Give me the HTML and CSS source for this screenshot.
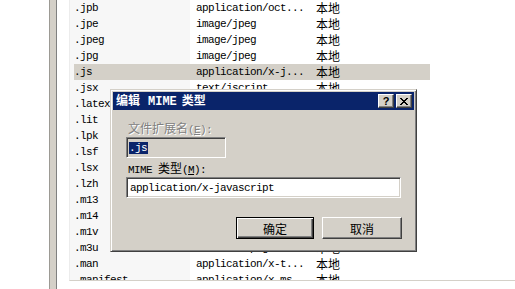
FILE: index.html
```html
<!DOCTYPE html>
<html lang="zh-CN">
<head>
    <meta charset="UTF-8">
    <title>编辑 MIME 类型</title>
    <link rel="stylesheet" href="styles.css">
</head>
<body>
    <div class="screen">
        <div class="side"></div>
        <div class="bar"></div>
        <div class="gap"></div>
        <div class="list">
            <div class="row"><span class="c1">.jpb</span><span class="c2">application/oct...</span><span class="c3">本地</span></div>
            <div class="row"><span class="c1">.jpe</span><span class="c2">image/jpeg</span><span class="c3">本地</span></div>
            <div class="row"><span class="c1">.jpeg</span><span class="c2">image/jpeg</span><span class="c3">本地</span></div>
            <div class="row"><span class="c1">.jpg</span><span class="c2">image/jpeg</span><span class="c3">本地</span></div>
            <div class="row sel"><span class="c1">.js</span><span class="c2">application/x-j...</span><span class="c3">本地</span></div>
            <div class="row"><span class="c1">.jsx</span><span class="c2">text/jscript</span><span class="c3">本地</span></div>
            <div class="row"><span class="c1">.latex</span><span class="c2">application/x-l...</span><span class="c3">本地</span></div>
            <div class="row"><span class="c1">.lit</span><span class="c2">application/x-ms...</span><span class="c3">本地</span></div>
            <div class="row"><span class="c1">.lpk</span><span class="c2">application/x-ms...</span><span class="c3">本地</span></div>
            <div class="row"><span class="c1">.lsf</span><span class="c2">video/x-la-asf</span><span class="c3">本地</span></div>
            <div class="row"><span class="c1">.lsx</span><span class="c2">video/x-la-asf</span><span class="c3">本地</span></div>
            <div class="row"><span class="c1">.lzh</span><span class="c2">application/oct...</span><span class="c3">本地</span></div>
            <div class="row"><span class="c1">.m13</span><span class="c2">application/x-ms...</span><span class="c3">本地</span></div>
            <div class="row"><span class="c1">.m14</span><span class="c2">application/x-ms...</span><span class="c3">本地</span></div>
            <div class="row"><span class="c1">.m1v</span><span class="c2">video/mpeg</span><span class="c3">本地</span></div>
            <div class="row"><span class="c1">.m3u</span><span class="c2">audio/x-mpegurl</span><span class="c3">本地</span></div>
            <div class="row"><span class="c1">.man</span><span class="c2">application/x-t...</span><span class="c3">本地</span></div>
            <div class="row"><span class="c1">.manifest</span><span class="c2">application/x-ms...</span><span class="c3">本地</span></div>
        </div>

        <div class="dialog">
            <div class="title">
                <span class="title-text">编辑<span class="en-b">MIME</span>类型</span>
                <div class="caption-btns">
                    <div class="cbtn help">?</div>
                    <div class="cbtn close">
                        <svg width="8" height="7" viewBox="0 0 8 7">
                            <path d="M0 0h2v1h-2zM6 0h2v1h-2zM1 1h2v1h-2zM5 1h2v1h-2zM2 2h4v1h-4zM3 3h2v1h-2zM2 4h4v1h-4zM1 5h2v1h-2zM5 5h2v1h-2zM0 6h2v1h-2zM6 6h2v1h-2z" fill="#000"/>
                        </svg>
                    </div>
                </div>
            </div>
            <div class="body">
                <div class="label disabled">文件扩展名<span class="en">(<u>E</u>):</span></div>
                <div class="edit edit-ext"><span class="en picked">.js</span></div>
                <div class="label"><span class="en">MIME&nbsp;</span>类型<span class="en">(<u>M</u>):</span></div>
                <div class="edit edit-type"><span class="en">application/x-javascript</span></div>
                <div class="buttons">
                    <div class="btn default">确定</div>
                    <div class="btn cancel">取消</div>
                </div>
            </div>
        </div>
    </div>
</body>
</html>
```

FILE: styles.css
```css
body {
    margin: 0;
    background: #ffffff;
    color: #000000;
    font-family: "Noto Sans CJK SC", "Liberation Sans", sans-serif;
    font-size: 12px;
    overflow: hidden;
}

.screen {
    position: relative;
    display: flex;
    width: 515px;
    height: 289px;
    overflow: hidden;
}

.side {
    width: 49px;
}

.bar {
    width: 6px;
    background: #d4d0c8;
    border-left: 1px solid #9c9a94;
    border-right: 1px solid #808080;
}

.gap {
    width: 12px;
}

.list {
    flex: 1;
    height: 280px;
    overflow: hidden;
    border-left: 1px solid #ececec;
    border-bottom: 1px solid #d4d0c8;
    background: linear-gradient(to right, #f7f7f7 120px, #ffffff 120px);
}

.row {
    display: grid;
    grid-template-columns: 122px 120px 114px;
    width: 356px;
    height: 16px;
    margin-left: 4px;
    line-height: 16px;
    white-space: nowrap;
}

.row.sel {
    background: #d4d0c8;
}

.c1,
.c2,
.en {
    font-family: "Liberation Mono", monospace;
    font-size: 11px;
    letter-spacing: -0.6px;
}

.c3 {
    font-size: 12px;
}

/* dialog */
.dialog {
    position: absolute;
    left: 110px;
    top: 89px;
    width: 307px;
    height: 163px;
    box-sizing: border-box;
    padding: 2px;
    background: #d4d0c8;
    border: 1px solid;
    border-color: #d4d0c8 #404040 #404040 #d4d0c8;
    box-shadow: inset 1px 1px #ffffff, inset -1px -1px #808080;
}

.title {
    display: flex;
    align-items: center;
    height: 18px;
    padding-left: 3px;
    background: #0a246a;
    color: #ffffff;
}

.title-text {
    font-weight: bold;
    font-size: 12px;
    line-height: 18px;
    white-space: nowrap;
}

.en-b {
    margin: 0 5px 0 8px;
    font-family: "Liberation Mono", monospace;
    font-weight: bold;
    font-size: 12px;
}

.caption-btns {
    display: flex;
    gap: 2px;
    margin-left: auto;
    margin-right: 2px;
}

.cbtn {
    display: flex;
    align-items: center;
    justify-content: center;
    width: 16px;
    height: 14px;
    box-sizing: border-box;
    background: #d4d0c8;
    border: 1px solid;
    border-color: #ffffff #404040 #404040 #ffffff;
    box-shadow: inset -1px -1px #808080;
    color: #000000;
}

.help {
    font-family: "Liberation Sans", sans-serif;
    font-weight: bold;
    font-size: 11px;
    line-height: 12px;
}

.body {
    padding: 10px 12px 0 13px;
}

.label {
    height: 16px;
    margin-left: 2px;
    line-height: 16px;
    white-space: nowrap;
}

.label.disabled {
    color: #808080;
    text-shadow: 1px 1px #ffffff;
}

.label + .edit {
    margin-top: 1px;
}

.edit {
    display: flex;
    align-items: center;
    height: 21px;
    box-sizing: border-box;
    border: 1px solid;
    border-color: #808080 #ffffff #ffffff #808080;
    box-shadow: inset 1px 1px #404040, inset -1px -1px #d4d0c8;
    padding-left: 2px;
    white-space: nowrap;
}

.edit-ext {
    width: 100px;
    background: #d4d0c8;
    margin-bottom: 2px;
}

.edit-type {
    width: 275px;
    background: #ffffff;
    padding-left: 3px;
}

.picked {
    display: inline-block;
    height: 12px;
    line-height: 12px;
    padding-right: 1px;
    background: #0a246a;
    color: #ffffff;
}

.buttons {
    display: flex;
    justify-content: flex-end;
    gap: 8px;
    margin-top: 19px;
}

.btn {
    display: flex;
    align-items: center;
    justify-content: center;
    height: 22px;
    box-sizing: border-box;
    background: #d4d0c8;
    font-size: 12px;
}

.btn.default {
    width: 78px;
    border: 1px solid #000000;
    box-shadow: inset 1px 1px #ffffff, inset -1px -1px #404040, inset -2px -2px #808080;
}

.btn.cancel {
    width: 80px;
    border: 1px solid;
    border-color: #ffffff #404040 #404040 #ffffff;
    box-shadow: inset -1px -1px #808080;
}
```
